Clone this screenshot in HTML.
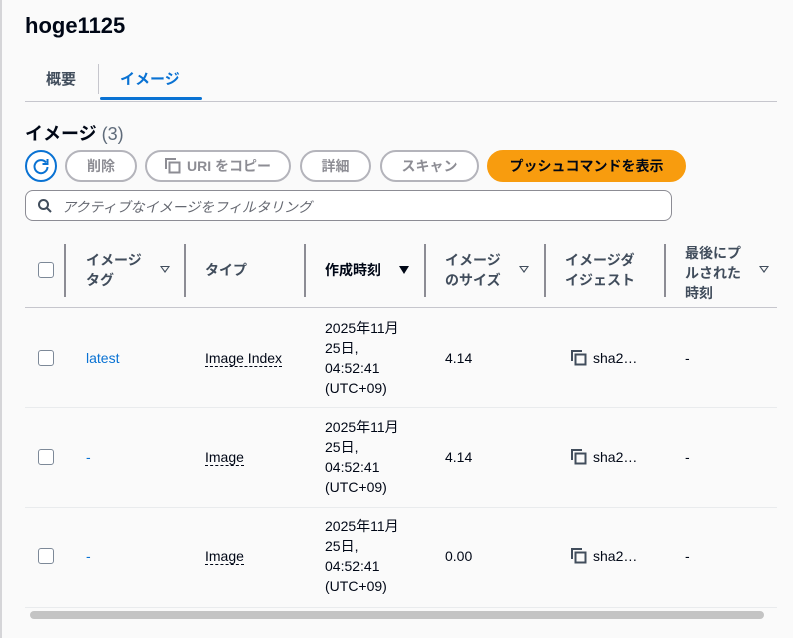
<!DOCTYPE html>
<html><head><meta charset="utf-8"><style>
body{margin:0;width:793px;height:638px;background:#fafafa;font-family:"Liberation Sans","Noto Sans CJK JP",sans-serif;color:#000716;position:relative;overflow:hidden}
.a{position:absolute;white-space:nowrap}
.btn{position:absolute;top:150px;border:2px solid #b4b4bb;border-radius:16px;color:#8d8d94;font-size:14px;font-weight:bold;display:flex;align-items:center;justify-content:center;box-sizing:border-box;height:32px;background:#fff}
.sep{position:absolute;top:244px;height:53px;width:2px;background:#8c8c94}
.hd{position:absolute;font-size:14px;font-weight:bold;color:#414d5c;line-height:20px}
.tri{position:absolute;width:0;height:0;border-left:5px solid transparent;border-right:5px solid transparent}
.cb{position:absolute;left:38px;width:14px;height:14px;border:1.5px solid #7d8998;border-radius:3px;background:#fff}
.row{position:absolute;left:25px;width:752px;height:1px;background:#e9ebed}
.c{position:absolute;font-size:14px;line-height:22px}
.d{position:absolute;font-size:14px;line-height:20px}
.dash{border-bottom:1.5px dashed #000716;line-height:16px}
</style></head><body>
<div class="a" style="left:0;top:0;width:2px;height:638px;background:#d5d5d8"></div>
<div class="a" style="left:25px;top:13px;font-size:22px;font-weight:bold">hoge1125</div>
<div class="a" style="left:46px;top:68px;font-size:15px;font-weight:bold;color:#414d5c">概要</div>
<div class="a" style="left:98px;top:64px;width:1px;height:30px;background:#c6c6cd"></div>
<div class="a" style="left:120px;top:68px;font-size:15px;font-weight:bold;color:#0972d3">イメージ</div>
<div class="a" style="left:100px;top:97px;width:102px;height:3px;border-radius:2px;background:#0972d3"></div>
<div class="a" style="left:25px;top:101px;width:752px;height:1px;background:#c6c6cd"></div>
<div class="a" style="left:25px;top:120px;font-size:18px;font-weight:bold">イメージ <span style="font-weight:normal;color:#5f6b7a">(3)</span></div>
<div class="a" style="left:25px;top:150px;width:28px;height:28px;border:2px solid #0972d3;border-radius:50%;background:#fff"><svg width="28" height="28" viewBox="0 0 28 28"><path d="M19 10.5A6.5 6.5 0 1 0 20.5 15" fill="none" stroke="#0972d3" stroke-width="2"/><path d="M20.5 7v5h-5" fill="none" stroke="#0972d3" stroke-width="2"/></svg></div>
<div class="btn" style="left:65px;width:72px">削除</div>
<div class="btn" style="left:145px;width:146px"><svg width="16" height="16" style="margin-right:6px" viewBox="0 0 16 16"><path d="M1 11V1h10" fill="none" stroke="#8d8d94" stroke-width="2"/><rect x="4.5" y="4.5" width="10" height="10" fill="none" stroke="#8d8d94" stroke-width="2"/></svg>URI をコピー</div>
<div class="btn" style="left:300px;width:71px">詳細</div>
<div class="btn" style="left:380px;width:99px">スキャン</div>
<div class="btn" style="left:487px;width:199px;background:#f89c0e;border-color:#f89c0e;color:#000716">プッシュコマンドを表示</div>
<div class="a" style="left:25px;top:190px;width:647px;height:31px;border:1px solid #8c8c94;border-radius:8px;background:#fff;box-sizing:border-box"></div>
<svg class="a" style="left:37px;top:198px" width="16" height="16" viewBox="0 0 16 16"><circle cx="6.5" cy="6.5" r="4.5" fill="none" stroke="#414d5c" stroke-width="2"/><path d="M10 10l4 4" stroke="#414d5c" stroke-width="2"/></svg>
<div class="a" style="left:62px;top:197px;font-size:14px;font-style:italic;color:#656871">アクティブなイメージをフィルタリング</div>
<div class="cb" style="top:262px"></div>
<div class="sep" style="left:64px"></div><div class="sep" style="left:184px"></div><div class="sep" style="left:304px"></div><div class="sep" style="left:424px"></div><div class="sep" style="left:544px"></div><div class="sep" style="left:664px"></div>
<div class="hd" style="left:86px;top:250px">イメージ<br>タグ</div>
<div class="tri" style="left:160px;top:266px;border-top:7px solid #414d5c"></div><div class="tri" style="left:162px;top:267px;border-left:3px solid transparent;border-right:3px solid transparent;border-top:4px solid #fafafa"></div>
<div class="hd" style="left:205px;top:260px">タイプ</div>
<div class="hd" style="left:325px;top:260px;color:#000716">作成時刻</div>
<div class="tri" style="left:399px;top:266px;border-top:8px solid #000716"></div>
<div class="hd" style="left:445px;top:250px">イメージ<br>のサイズ</div>
<div class="tri" style="left:519px;top:266px;border-top:7px solid #414d5c"></div><div class="tri" style="left:521px;top:267px;border-left:3px solid transparent;border-right:3px solid transparent;border-top:4px solid #fafafa"></div>
<div class="hd" style="left:565px;top:250px">イメージダ<br>イジェスト</div>
<div class="hd" style="left:685px;top:243px">最後にプ<br>ルされた<br>時刻</div>
<div class="tri" style="left:759px;top:266px;border-top:7px solid #414d5c"></div><div class="tri" style="left:761px;top:267px;border-left:3px solid transparent;border-right:3px solid transparent;border-top:4px solid #fafafa"></div>
<div class="row" style="top:307px;background:#c6c6cd"></div>
<div class="row" style="top:407px"></div>
<div class="row" style="top:507px"></div>
<div class="row" style="top:607px"></div>

<div class="cb" style="top:350px"></div>
<div class="c" style="left:86px;top:347px;color:#0972d3">latest</div>
<div class="c" style="left:205px;top:347px"><span class="dash">Image Index</span></div>
<div class="d" style="left:325px;top:318px">2025年11月<br>25日,<br>04:52:41<br>(UTC+09)</div>
<div class="c" style="left:445px;top:347px">4.14</div>
<svg class="a" style="left:571px;top:350px" width="16" height="16" viewBox="0 0 16 16"><path d="M1 11V1h10" fill="none" stroke="#414d5c" stroke-width="2"/><rect x="4.5" y="4.5" width="10" height="10" fill="none" stroke="#414d5c" stroke-width="2"/></svg>
<div class="c" style="left:593px;top:347px">sha2…</div>
<div class="c" style="left:685px;top:347px">-</div>

<div class="cb" style="top:449px"></div>
<div class="c" style="left:86px;top:446px;color:#0972d3">-</div>
<div class="c" style="left:205px;top:446px"><span class="dash">Image</span></div>
<div class="d" style="left:325px;top:417px">2025年11月<br>25日,<br>04:52:41<br>(UTC+09)</div>
<div class="c" style="left:445px;top:446px">4.14</div>
<svg class="a" style="left:571px;top:449px" width="16" height="16" viewBox="0 0 16 16"><path d="M1 11V1h10" fill="none" stroke="#414d5c" stroke-width="2"/><rect x="4.5" y="4.5" width="10" height="10" fill="none" stroke="#414d5c" stroke-width="2"/></svg>
<div class="c" style="left:593px;top:446px">sha2…</div>
<div class="c" style="left:685px;top:446px">-</div>

<div class="cb" style="top:548px"></div>
<div class="c" style="left:86px;top:545px;color:#0972d3">-</div>
<div class="c" style="left:205px;top:545px"><span class="dash">Image</span></div>
<div class="d" style="left:325px;top:516px">2025年11月<br>25日,<br>04:52:41<br>(UTC+09)</div>
<div class="c" style="left:445px;top:545px">0.00</div>
<svg class="a" style="left:571px;top:548px" width="16" height="16" viewBox="0 0 16 16"><path d="M1 11V1h10" fill="none" stroke="#414d5c" stroke-width="2"/><rect x="4.5" y="4.5" width="10" height="10" fill="none" stroke="#414d5c" stroke-width="2"/></svg>
<div class="c" style="left:593px;top:545px">sha2…</div>
<div class="c" style="left:685px;top:545px">-</div>

<div class="a" style="left:30px;top:611px;width:734px;height:8px;border-radius:4px;background:#c4c4c4"></div>
</body></html>
